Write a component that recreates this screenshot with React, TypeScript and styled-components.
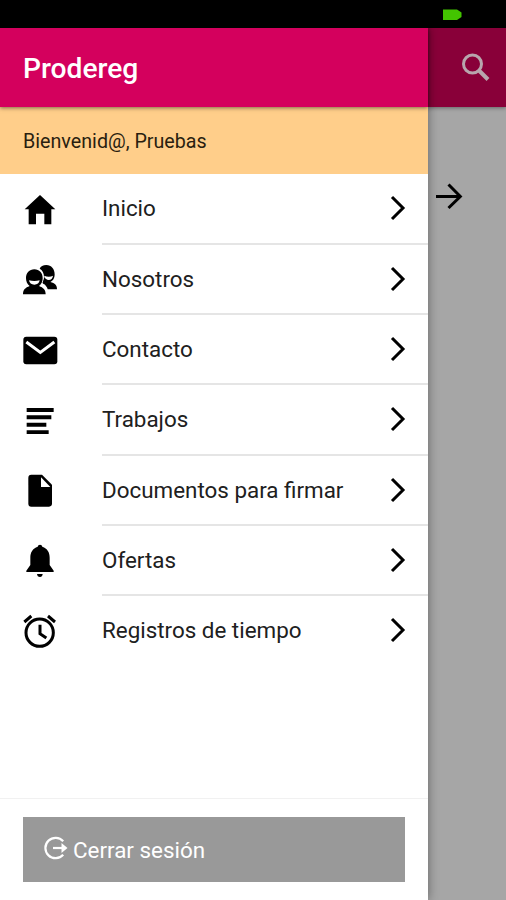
import React from 'react';
import styled, { createGlobalStyle } from 'styled-components';

const GlobalStyle = createGlobalStyle`
  * { box-sizing: border-box; }
  body { margin: 0; background: #a6a6a6; font-family: Roboto, "Liberation Sans", sans-serif; }
`;

const Screen = styled.div`
  display: grid;
  grid-template-rows: 28px 872px;
  width: 506px;
  height: 900px;
  overflow: hidden;
`;

const StatusBar = styled.header`
  display: flex;
  justify-content: flex-end;
  align-items: flex-start;
  padding: 9px 43px 0 0;
  background: #000;
`;

const Body = styled.div`
  display: grid;
  grid-template-columns: 428px 78px;
  min-height: 0;
`;

const Drawer = styled.aside`
  display: flex;
  flex-direction: column;
  min-height: 0;
  background: #fff;
  box-shadow: 0 0 10px rgba(0, 0, 0, 0.4);
  z-index: 1;
`;

const TitleBar = styled.div`
  flex: 0 0 79px;
  padding: 24px 23px 0;
  color: #fff;
  background: #d4005d;
  box-shadow: 0 1px 4px rgba(0, 0, 0, 0.5);
  z-index: 1;
`;

const Title = styled.h1`
  margin: 0;
  font-size: 28.2px;
  font-weight: 500;
  line-height: 33px;
`;

const Welcome = styled.div`
  flex: 0 0 66.5px;
  min-height: 0;
  padding-left: 23px;
  line-height: 69px;
  font-size: 19.7px;
  color: #2a1e10;
  background: #ffce8a;
`;

const Menu = styled.nav`
  flex: 1;
  padding-top: 0.7px;
`;

const Row = styled.a`
  display: flex;
  align-items: center;
  height: 70.33px;
  padding-left: 10px;
  color: #202020;
`;

const RowIcon = styled.svg`
  flex: none;
  width: 60px;
  height: 60px;
  margin: -1px 32px 0 0;
`;

const RowContent = styled.div<{ $divided: boolean }>`
  flex: 1;
  display: flex;
  align-items: center;
  justify-content: space-between;
  height: 100%;
  padding-right: 21px;
  border-bottom: 2px solid ${(p) => (p.$divided ? '#e5e5e5' : 'transparent')};
`;

const Label = styled.span`
  font-size: 22.4px;
  white-space: nowrap;
`;

const Footer = styled.footer`
  flex: 0 0 102.5px;
  padding: 18px 23px 0;
  border-top: 1px solid #f1f1f1;
`;

const LogoutButton = styled.button`
  display: flex;
  align-items: center;
  gap: 4px;
  width: 382px;
  height: 65px;
  padding: 2px 20px 0;
  border: 0;
  font-family: inherit;
  font-size: 22.4px;
  color: #fff;
  background: #999;
`;

const LogoutIcon = styled.svg`
  width: 26px;
  height: 26px;
  margin-top: -5px;
`;

const Page = styled.main`
  display: flex;
  flex-direction: column;
  background: #a6a6a6;
`;

const PageBar = styled.div`
  flex: 0 0 79px;
  padding: 24px 0 0 32px;
  background: #890039;
  box-shadow: 0 1px 4px rgba(0, 0, 0, 0.4);
`;

const PageContent = styled.div`
  padding: 74px 0 0 6px;
`;

const icons: Record<string, React.ReactNode> = {
  home: <path d="M90 48 136 91H124V136H103V104H78V136H56V91H44Z" />,
  people: (
    <g>
      <path d="M95 121h46c0-13-6-18-20-22 8-4 13-12 13-22 0-17-10-29-25-29-10 0-17 4-20 11 8 4 13 13 13 24 0 7-2 12-6 17 3 5 6 6 9 7 4 5 7 8 8 14Z" />
      <path d="M103 80c8 4 19 4 26 0-1 8-6 13-13 13-6 0-10-4-13-8Z" fill="#fff" />
      <path d="M39 136c0-14 7-20 20-25-7-5-11-13-11-23 0-16 10-27 25-27s25 11 25 27c0 10-4 18-11 23 13 5 20 11 20 25Z" stroke="#fff" strokeWidth="4" paintOrder="stroke" />
      <path d="M57 94c10 3 22 3 32 0-1 8-7 13-16 13s-15-5-16-13Z" fill="#fff" />
    </g>
  ),
  mail: (
    <g>
      <rect x="40" y="50" width="102" height="83" rx="9" />
      <path d="m49 66 42 31 42-31" fill="none" stroke="#fff" strokeWidth="9" />
    </g>
  ),
  list: <path d="M50 54h81v12H50ZM50 76h74v12H50ZM50 98h59v12H50ZM50 121h66v11H50Z" />,
  file: (
    <g>
      <path d="M64 44H96L126 74V130Q126 140 117 140H64Q55 140 55 131V53Q55 44 64 44Z" />
      <path d="M93 52V81H121Z" fill="#fff" />
    </g>
  ),
  bell: (
    <g>
      <path d="M83 50Q84 44 90 44Q96 44 97 50C112 55 119 67 119 83V105L131 122V126H49V122L61 105V83C61 67 68 55 83 50Z" />
      <path d="M81 132H98Q97 141 90 141Q82 141 81 132Z" />
    </g>
  ),
  clock: (
    <g fill="none" stroke="currentColor" strokeWidth="9">
      <circle cx="89" cy="95" r="41" />
      <path d="M90 71V98L109 111M43 63 64 45M135 63 114 45" />
    </g>
  ),
};

const items = [
  { icon: 'home', label: 'Inicio' },
  { icon: 'people', label: 'Nosotros' },
  { icon: 'mail', label: 'Contacto' },
  { icon: 'list', label: 'Trabajos' },
  { icon: 'file', label: 'Documentos para firmar' },
  { icon: 'bell', label: 'Ofertas' },
  { icon: 'clock', label: 'Registros de tiempo' },
];

export default function App() {
  return (
    <>
      <GlobalStyle />
      <Screen>
        <StatusBar>
          <svg width="21" height="12" viewBox="0 0 21 12">
            <path d="M1 .5H15L19.5 3.5V8L15 11H1Z" fill="#43c400" />
          </svg>
        </StatusBar>
        <Body>
          <Drawer>
            <TitleBar>
              <Title>Prodereg</Title>
            </TitleBar>
            <Welcome>Bienvenid@, Pruebas</Welcome>
            <Menu>
              {items.map((item, i) => (
                <Row key={item.label}>
                  <RowIcon viewBox="0 0 180 180" color="#000">{icons[item.icon]}</RowIcon>
                  <RowContent $divided={i < items.length - 1}>
                    <Label>{item.label}</Label>
                    <svg width="18" height="28" viewBox="0 0 18 28" fill="none" stroke="#000" strokeWidth="3">
                      <path d="M3 3 14 14 3 25" />
                    </svg>
                  </RowContent>
                </Row>
              ))}
            </Menu>
            <Footer>
              <LogoutButton>
                <LogoutIcon viewBox="0 0 26 26" fill="none" stroke="#fff" strokeWidth="2.2">
                  <path d="M20.2 6.2A10.2 10.2 0 1 0 20.2 19.8" />
                  <path d="M10 13H20" />
                  <path d="M18.5 8 24.5 13 18.5 18Z" fill="#fff" stroke="none" />
                </LogoutIcon>
                Cerrar sesión
              </LogoutButton>
            </Footer>
          </Drawer>
          <Page>
            <PageBar>
              <svg width="32" height="32" viewBox="0 0 32 32" fill="none" stroke="#b8a5ad">
                <circle cx="12.5" cy="12" r="9" strokeWidth="3" />
                <path d="M19 18.5 28 27.5" strokeWidth="4" />
              </svg>
            </PageBar>
            <PageContent>
              <svg width="30" height="30" viewBox="0 0 30 30" fill="none" stroke="#000" strokeWidth="3">
                <path d="M2 15.5H26M14.5 3.5 26.3 15.5 14.5 27" />
              </svg>
            </PageContent>
          </Page>
        </Body>
      </Screen>
    </>
  );
}
